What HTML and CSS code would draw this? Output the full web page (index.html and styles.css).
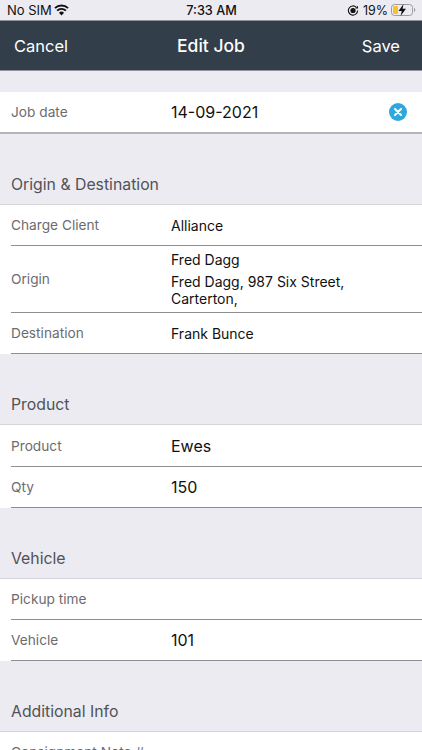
FILE: index.html
```html
<!DOCTYPE html>
<html lang="en">
<head>
    <meta charset="UTF-8">
    <meta name="viewport" content="width=device-width, initial-scale=1.0">
    <title>Edit Job</title>
    <link rel="stylesheet" href="styles.css">
</head>
<body>
    <div class="status">
        <div class="status-left">
            <span>No SIM</span>
            <svg class="wifi" width="15" height="12" viewBox="0 0 16 12">
                <path d="M1 4a10 10 0 0 1 14 0M3.300 6.700a6.800 6.800 0 0 1 9.400 0" fill="none" stroke="#111" stroke-width="2"/>
                <path d="M8 11.800l2.700-2.900a3.800 3.800 0 0 0-5.400 0z" fill="#111"/>
            </svg>
        </div>
        <div class="status-time">7:33 AM</div>
        <div class="status-right">
            <svg width="12" height="12" viewBox="0 0 12 12">
                <circle cx="6" cy="6.500" r="2.600" fill="#111"/>
                <path d="M10.600 6.500a4.600 4.600 0 1 1-1.300-3.200" fill="none" stroke="#111" stroke-width="1.100"/>
                <path d="M11 1.800v2.800H8.200z" fill="#111"/>
            </svg>
            <span>19%</span>
            <svg class="battery" width="25" height="12" viewBox="0 0 25 12">
                <rect x=".5" y=".5" width="21" height="11" rx="3" fill="none" stroke="#9b9ba0"/>
                <rect x="2" y="2" width="5" height="8" rx="1" fill="#f5c32c"/>
                <path d="M23 4v4c.8-.3 1.300-1.100 1.300-2S23.800 4.300 23 4z" fill="#9b9ba0"/>
                <path d="M12.500 0L7.500 7h3.300l-1.300 5 5.500-7.200h-3.400z" fill="#111"/>
            </svg>
        </div>
    </div>

    <div class="navbar">
        <span class="nav-btn">Cancel</span>
        <span class="nav-title">Edit Job</span>
        <span class="nav-btn nav-save">Save</span>
    </div>

    <div class="group first">
        <div class="row row-date">
            <div class="label">Job date</div>
            <div class="value big">14-09-2021</div>
            <svg class="clear" width="18" height="18" viewBox="0 0 18 18">
                <circle cx="9" cy="9" r="9" fill="#2ea8df"/>
                <path d="M6 6l6 6M12 6l-6 6" stroke="#fff" stroke-width="2" stroke-linecap="round"/>
            </svg>
        </div>
    </div>

    <h3 class="section">Origin &amp; Destination</h3>
    <div class="group">
        <div class="row">
            <div class="label">Charge Client</div>
            <div class="value">Alliance</div>
        </div>
        <div class="row row-origin">
            <div class="label">Origin</div>
            <div class="value">
                <div class="origin-name">Fred Dagg</div>
                <div>Fred Dagg, 987 Six Street,<br>Carterton,</div>
            </div>
        </div>
        <div class="row">
            <div class="label">Destination</div>
            <div class="value">Frank Bunce</div>
        </div>
    </div>

    <h3 class="section">Product</h3>
    <div class="group">
        <div class="row row-tall">
            <div class="label">Product</div>
            <div class="value big">Ewes</div>
        </div>
        <div class="row">
            <div class="label">Qty</div>
            <div class="value big">150</div>
        </div>
    </div>

    <h3 class="section">Vehicle</h3>
    <div class="group">
        <div class="row">
            <div class="label">Pickup time</div>
            <div class="value"></div>
        </div>
        <div class="row">
            <div class="label">Vehicle</div>
            <div class="value big">101</div>
        </div>
    </div>

    <h3 class="section">Additional Info</h3>
    <div class="group">
        <div class="row">
            <div class="label">Consignment Note #</div>
            <div class="value"></div>
        </div>
    </div>
</body>
</html>
```

FILE: styles.css
```css
body {
    margin: 0;
    height: 750px;
    overflow: hidden;
    background: #ebebf1;
    color: #111;
    font-family: Inter, "Liberation Sans", sans-serif;
}
.status {
    height: 20px;
    display: grid;
    grid-template-columns: 1fr auto 1fr;
    align-items: center;
    padding: 0 6px 0 7px;
    font-size: 13px;
    border-bottom: 1px solid #8f949c;
}
.status-left {
    display: flex;
    align-items: center;
    gap: 2px;
}
.status-time {
    font-size: 12.7px;
    font-weight: 500;
}
.status-right {
    display: flex;
    align-items: center;
    justify-content: flex-end;
    gap: 4px;
    font-size: 12.5px;
}
.battery {
    margin-left: -1px;
}
.navbar {
    height: 49px;
    background: #333e4b;
    border-bottom: 1px solid #8f949c;
    display: grid;
    grid-template-columns: 1fr auto 1fr;
    align-items: center;
    padding: 0 22px 0 14px;
    color: #fff;
    font-size: 16.5px;
}
.nav-title {
    font-size: 17.5px;
    font-weight: 500;
    margin-left: 8px;
}
.nav-save {
    text-align: right;
}
.group {
    background: #fff;
    border-top: 1px solid #d4d4d8;
}
.group.first {
    margin-top: 21px;
    border-top: 0;
}
.row {
    display: flex;
    align-items: center;
    min-height: 40px;
    margin-left: 11px;
    border-bottom: 1px solid #8e8e92;
    font-size: 14px;
}
.group:last-child .row {
    border-bottom: 0;
}
.row-date {
    margin-left: 0;
    padding-left: 11px;
    border-bottom: 2px solid #b5b5b9;
}
.row-origin {
    padding: 5px 0;
    line-height: 17px;
}
.row-tall {
    min-height: 41px;
}
.origin-name {
    margin-bottom: 5px;
}
.label {
    width: 160px;
    flex-shrink: 0;
    font-size: 13.7px;
    color: #6c6c70;
}
.value {
    flex: 1;
}
.big {
    font-size: 16px;
}
.clear {
    margin-right: 15px;
}
.section {
    margin: 0;
    padding: 41px 11px 9px;
    font-size: 15.8px;
    font-weight: 400;
    line-height: 20px;
    color: #525257;
}
```
